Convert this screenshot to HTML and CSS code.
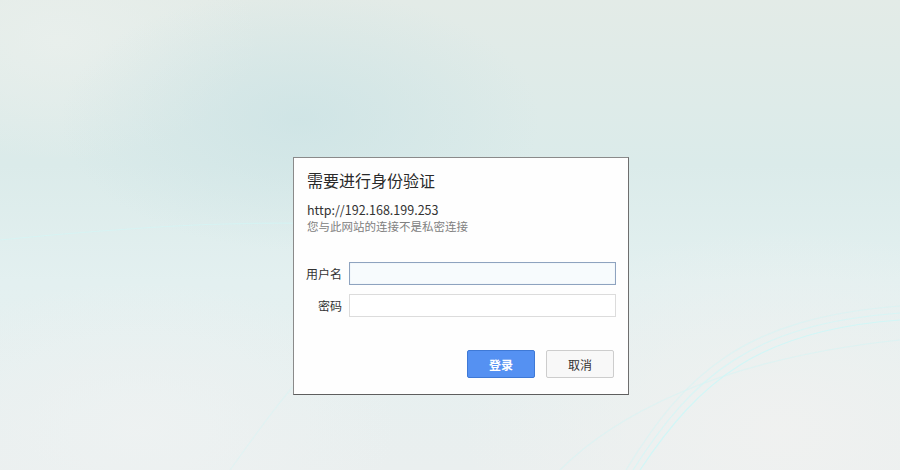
FILE: index.html
```html
<!DOCTYPE html>
<html lang="zh-CN">

<head>
  <meta charset="UTF-8" />
  <meta name="viewport" content="width=device-width, initial-scale=1" />
  <title>需要进行身份验证</title>
  <link rel="stylesheet" href="styles.css">
</head>

<body>
  <svg class="waves" width="900" height="470" viewBox="0 0 900 470">
    <g fill="none" stroke="#d2f6f6" stroke-width="1.2">
      <path d="M640 470 C700 380 760 330 900 320" />
      <path d="M633 470 C693 376 752 324 900 313" opacity="0.7" />
      <path d="M626 470 C686 372 745 318 900 306" opacity="0.5" />
      <path d="M560 470 C610 420 710 360 900 340" opacity="0.5" />
      <path d="M230 470 C280 400 380 260 520 200" opacity="0.4" />
      <path d="M0 240 C150 225 300 215 450 232" opacity="0.6" />
    </g>
  </svg>

  <div class="page">
    <div class="auth-dialog">
      <p class="title">需要进行身份验证</p>
      <p class="site-url">http://192.168.199.253</p>
      <p class="site-note">您与此网站的连接不是私密连接</p>

      <div class="form-rows">
        <div class="form-row">
          <label class="form-label">用户名</label>
          <input class="form-input form-input-focus" type="text">
        </div>
        <div class="form-row">
          <label class="form-label">密码</label>
          <input class="form-input" type="password">
        </div>
      </div>

      <div class="button-row">
        <button class="login-button">登录</button>
        <button class="cancel-button">取消</button>
      </div>
    </div>
  </div>
</body>

</html>
```

FILE: styles.css
```css
* {
  box-sizing: border-box;
}

body {
  margin: 0;
  width: 900px;
  height: 470px;
  overflow: hidden;
  font-family: "Noto Sans CJK SC", "Noto Sans", sans-serif;
  background:
    radial-gradient(ellipse 240px 130px at 300px 120px, rgba(202, 226, 228, 0.7), rgba(202, 226, 228, 0) 100%),
    radial-gradient(ellipse 320px 200px at 780px 430px, rgba(240, 241, 240, 0.95), rgba(240, 241, 240, 0) 100%),
    radial-gradient(ellipse 260px 150px at 140px 430px, rgba(238, 242, 242, 0.9), rgba(238, 242, 242, 0) 100%),
    radial-gradient(ellipse 200px 120px at 60px 40px, rgba(234, 240, 237, 0.8), rgba(234, 240, 237, 0) 100%),
    linear-gradient(180deg, #e3ebe7 0%, #dbebea 35%, #e3f0f0 60%, #eaefef 100%);
  position: relative;
}

.waves {
  position: absolute;
  left: 0;
  top: 0;
}

.page {
  position: relative;
  padding: 157px 0 0 293px;
}

.auth-dialog {
  width: 336px;
  height: 238px;
  background: #fefefe;
  border: 1px solid #8a8a8a;
  border-bottom-color: #5e5e5e;
  border-right-color: #6e6e6e;
  padding: 12px 12px 0 12px;
  display: flex;
  flex-direction: column;
}

.title {
  margin: 0 0 0 1px;
  font-size: 16px;
  line-height: 20px;
  color: #2a2a2a;
}

.site-url {
  margin: 12px 0 0 1px;
  font-size: 12.5px;
  line-height: 15px;
  color: #333;
}

.site-note {
  margin: 1px 0 0 1px;
  font-size: 11.5px;
  line-height: 16px;
  color: #808080;
}

.form-rows {
  margin-top: 28px;
  display: flex;
  flex-direction: column;
  gap: 9px;
}

.form-row {
  display: flex;
  align-items: center;
  gap: 7px;
}

.form-label {
  width: 36px;
  text-align: right;
  font-size: 12px;
  color: #333;
  white-space: nowrap;
}

.form-input {
  width: 267px;
  height: 23px;
  border: 1px solid #dcdcdc;
  background: #fff;
  outline: none;
  padding: 0 4px;
}

.form-input-focus {
  border: 1px solid #8ea3bf;
  background: #f7fbfd;
  box-shadow: inset 0 0 1px #c5d4e6;
}

.button-row {
  margin-top: 33px;
  display: flex;
  justify-content: flex-end;
  gap: 11px;
  padding-right: 2px;
}

.login-button,
.cancel-button {
  width: 68px;
  height: 28px;
  font-family: "Noto Sans CJK SC", "Noto Sans", sans-serif;
  font-size: 12px;
  border-radius: 2px;
  cursor: pointer;
}

.login-button {
  background: #5591f2;
  border: 1px solid #3f79d6;
  color: #fff;
  font-weight: bold;
}

.cancel-button {
  background: #f8f8f8;
  border: 1px solid #cdcdcd;
  color: #333;
}
```
